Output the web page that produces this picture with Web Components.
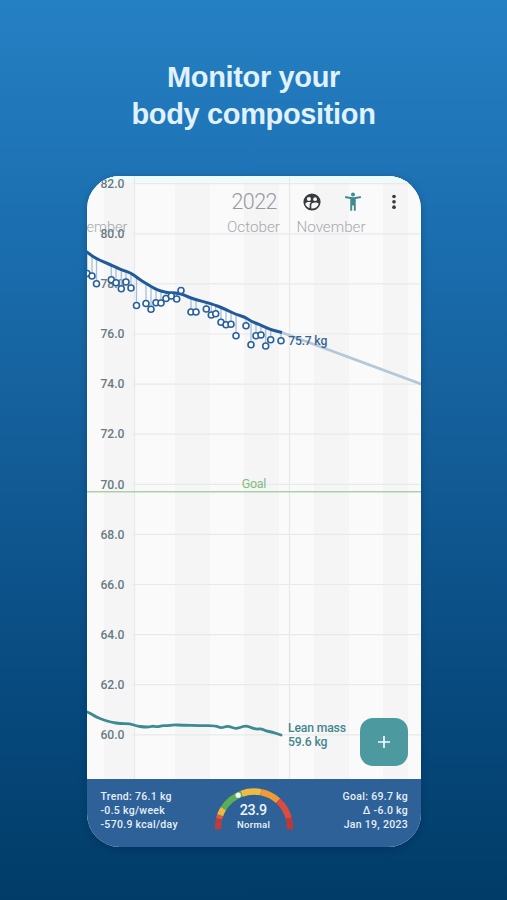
<!DOCTYPE html>
<html lang="en">
<head>
<meta charset="utf-8">
<title>Body composition</title>
<style>
  html, body { margin: 0; height: 100%; }
  body { font-family: Roboto, "Noto Sans", sans-serif; }
</style>
</head>
<body>
<promo-screen>
  <span slot="title">Monitor your<br>body composition</span>
  <phone-card>
    <weight-chart></weight-chart>
    <chart-toolbar slot="toolbar"></chart-toolbar>
    <add-button slot="action"></add-button>
    <summary-bar slot="footer">
      <stat-lines>
        <span>Trend: 76.1 kg</span>
        <span>-0.5 kg/week</span>
        <span>-570.9 kcal/day</span>
      </stat-lines>
      <bmi-gauge slot="middle" value="23.9" label="Normal"></bmi-gauge>
      <stat-lines slot="end" align="end">
        <span>Goal: 69.7 kg</span>
        <span>Δ -6.0 kg</span>
        <span>Jan 19, 2023</span>
      </stat-lines>
    </summary-bar>
  </phone-card>
</promo-screen>

<script>
(function () {
  // Chart units: x runs 87..421, y runs 176..779.
  const VIEW = { x: 87, y: 176, width: 334, height: 603 };
  const WEIGHT_TOP = 82;
  const WEIGHT_TOP_Y = 183.7;
  const KG = 25.05;

  const TREND = [
    [86, 251.5], [90, 254.5], [96, 258.5], [104, 262], [111, 265], [117, 267.8], [123, 270.3], [131, 273],
    [137, 277.5], [142, 281], [147, 284], [152, 287], [157, 289.8], [163, 291.7], [169, 292.6],
    [176, 293], [181, 293.8], [186, 296], [191, 298], [197, 300], [206, 302.2], [215, 305], [221, 307.5],
    [228, 310.5], [236, 314.5], [245, 317], [251, 321.3], [260, 324.7], [270, 329.5], [282, 332.5],
  ];

  const READINGS = [
    [87, 273.5], [92, 276], [96.5, 283.7], [111.3, 279.7], [116, 282.7], [121.3, 288.7], [126, 282],
    [131, 288], [136.5, 305.5], [146, 303.5], [151, 309.3], [156, 302.7], [161, 303], [166, 298.5],
    [171.3, 296], [176.7, 299], [181, 290.5], [191, 312], [196, 312], [206.3, 309], [211.3, 315],
    [215.7, 313.7], [221, 322.3], [226, 324.7], [231, 324.3], [236, 335.7], [246, 325.7],
    [251, 344.7], [256, 335.7], [261, 335], [265.7, 346], [270.7, 339.7], [281, 340.7],
  ];

  const LEAN = [
    [86, 711.5], [90, 713], [96, 717], [104, 720], [112, 722.5], [120, 723.5], [130, 723.6], [136, 726],
    [144, 727], [149, 727], [153, 726], [157, 727], [162, 725.6], [167, 725.8], [173, 724.8], [182, 725.2],
    [200, 725.6], [216, 725.8], [221, 728.2], [228, 725.8], [235, 728.8], [240, 727.5], [246, 725.5],
    [252, 728], [257, 729.3], [261, 728.5], [266, 731], [272, 732], [281, 735],
  ];

  // Week stripes: [start, width]
  const STRIPES = [[104, 31], [175, 35], [244, 35], [314, 35], [383, 25]];

  // Rounds the corners by running a quadratic curve through each midpoint.
  function toCurve(list) {
    let d = `M${list[0].join(" ")}`;
    for (let i = 1; i < list.length - 1; i += 1) {
      const [x, y] = list[i];
      const [nextX, nextY] = list[i + 1];
      d += `Q${x} ${y} ${(x + nextX) / 2} ${(y + nextY) / 2}`;
    }
    return `${d}L${list[list.length - 1].join(" ")}`;
  }

  function trendAt(x) {
    for (let i = 1; i < TREND.length; i += 1) {
      const [x0, y0] = TREND[i - 1];
      const [x1, y1] = TREND[i];
      if (x <= x1) return y0 + ((y1 - y0) * (x - x0)) / (x1 - x0);
    }
    return TREND[TREND.length - 1][1];
  }

  class PromoScreen extends HTMLElement {
    constructor() {
      super();
      this.attachShadow({ mode: "open" });
      this.shadowRoot.innerHTML = `
        <style>
          :host {
            align-items: center;
            background: linear-gradient(#2580c3 0%, #1b6fb0 25%, #135d98 50%, #084b80 75%, #013c68 100%);
            box-sizing: border-box;
            display: flex;
            flex-direction: column;
            height: 900px;
            overflow: hidden;
            padding-top: 59px;
          }

          h1 {
            color: #e0f1ff;
            font: bold 29px/36.5px "Liberation Sans", Arial, sans-serif;
            height: 117px;
            letter-spacing: -0.35px;
            margin: 0;
            text-align: center;
          }
        </style>
        <h1><slot name="title"></slot></h1>
        <slot></slot>
      `;
    }
  }

  class PhoneCard extends HTMLElement {
    constructor() {
      super();
      this.attachShadow({ mode: "open" });
      this.shadowRoot.innerHTML = `
        <style>
          :host {
            background: #fafafa;
            border-radius: 33px;
            box-shadow: 0 2px 7px rgba(0, 25, 60, 0.3);
            display: flex;
            flex-direction: column;
            height: 671px;
            margin-left: 1px;
            overflow: hidden;
            position: relative;
            width: 334px;
          }

          .toolbar {
            position: absolute;
            right: 17px;
            top: 15px;
          }

          .action {
            position: absolute;
            bottom: 81px;
            right: 13px;
          }
        </style>
        <slot></slot>
        <div class="toolbar"><slot name="toolbar"></slot></div>
        <div class="action"><slot name="action"></slot></div>
        <slot name="footer"></slot>
      `;
    }
  }

  class WeightChart extends HTMLElement {
    constructor() {
      super();
      this.attachShadow({ mode: "open" });
    }

    connectedCallback() {
      this.render();
    }

    render() {
      const stripes = STRIPES.map(
        ([x, width]) => `<rect x="${x}" y="176" width="${width}" height="603" fill="#f5f5f5"/>`
      ).join("");

      let rows = "";
      let labels = "";
      for (let kg = WEIGHT_TOP; kg >= 60; kg -= 2) {
        const y = WEIGHT_TOP_Y + (WEIGHT_TOP - kg) * KG;
        rows += `<path d="M133 ${y}H421"/>`;
        labels += `<text x="100.5" y="${y + 4.2}" textLength="24">${kg.toFixed(1)}</text>`;
      }

      const stems = READINGS.map(([x, y]) => `M${x} ${trendAt(x).toFixed(1)}V${y}`).join("");
      const dots = READINGS.map(([x, y]) => `<circle cx="${x}" cy="${y}" r="3"/>`).join("");

      this.shadowRoot.innerHTML = `
        <style>
          :host {
            display: block;
            flex: 1;
          }

          svg { display: block; }
          text { font-family: Roboto, sans-serif; }
          .grid { fill: none; stroke: #e7eaea; stroke-width: 1.2; }
          .axis { fill: #687b84; font-size: 12.2px; font-weight: 500; }
          .months { fill: #a5a9ad; font-size: 15.5px; font-weight: 300; }
          .months .year { fill: #97999c; font-size: 21.5px; }
          .stems { fill: none; stroke: #a5bfda; stroke-width: 1.3; }
          .dots { fill: #fff; stroke: #285f9f; stroke-width: 1.6; }
          .trend { fill: none; stroke: #205a9b; stroke-linejoin: round; stroke-width: 3; }
          .forecast { stroke: #b5c8d8; stroke-width: 2.8; }
          .lean { fill: none; stroke: #3d8a91; stroke-linecap: round; stroke-linejoin: round; stroke-width: 2.8; }
          .current { fill: #386396; font-size: 12.2px; font-weight: 500; }
          .mass { fill: #43868d; font-size: 12.2px; font-weight: 500; }
          .goal { fill: #83bb7d; font-size: 12.5px; }
        </style>
        <svg width="${VIEW.width}" height="${VIEW.height}" viewBox="${VIEW.x} ${VIEW.y} ${VIEW.width} ${VIEW.height}">
          <rect x="87" y="176" width="334" height="603" fill="#fafafa"/>
          ${stripes}
          <rect x="87" y="176" width="334" height="6" fill="#edfcfb"/>
          <g class="grid">${rows}<path d="M134.500 176V779M289.500 176V779"/></g>
          <g class="months">
            <text class="year" x="231.500" y="208.800" textLength="46">2022</text>
            <text x="127.500" y="232" text-anchor="end" textLength="70" lengthAdjust="spacingAndGlyphs">September</text>
            <text x="227" y="232" textLength="53" lengthAdjust="spacingAndGlyphs">October</text>
            <text x="296.500" y="232" textLength="69" lengthAdjust="spacingAndGlyphs">November</text>
          </g>
          <g class="axis">${labels}</g>
          <path d="M87 491.700H421" stroke="#a9d2a6" stroke-width="1.500"/>
          <text class="goal" x="241.800" y="487.800" textLength="24.500">Goal</text>
          <path class="forecast" d="M282 332.500L422 384.300"/>
          <path class="stems" d="${stems}"/>
          <path class="trend" d="${toCurve(TREND)}"/>
          <g class="dots">${dots}</g>
          <text class="current" x="288.300" y="344.500" textLength="39">75.7 kg</text>
          <path class="lean" d="${toCurve(LEAN)}"/>
          <g class="mass">
            <text x="288" y="731.800" textLength="58">Lean mass</text>
            <text x="288" y="745.600" textLength="39.500">59.6 kg</text>
          </g>
        </svg>
      `;
    }
  }

  class ChartToolbar extends HTMLElement {
    constructor() {
      super();
      this.attachShadow({ mode: "open" });
      this.shadowRoot.innerHTML = `
        <style>
          :host {
            align-items: center;
            display: flex;
            gap: 21px;
            height: 21px;
          }

          svg { display: block; }
        </style>
        <svg width="20" height="20" viewBox="0 0 24 24">
          <circle cx="12" cy="12" r="10.300" fill="#393b3e"/>
          <g fill="#f8f8f8">
            <circle cx="8.300" cy="8.400" r="2.500"/>
            <circle cx="15.700" cy="8.600" r="2.200"/>
            <path d="M4 14.300C4.200 12.700 6.400 12 8.300 12c1 0 1.900.2 2.600.5-1.200.8-1.700 1.600-1.700 2.700v4.100C6.600 18.500 4.700 16.700 4 14.300z"/>
            <path d="M11.200 15.300c0-1.500 2.300-2.600 4.600-2.600 1.800 0 3.700.6 4.200 1.700-.8 3.100-4 5.500-7.800 5.500-.3 0-.7 0-1-.1z"/>
          </g>
        </svg>
        <svg width="20" height="20" viewBox="0 0 24 24" fill="#408b91">
          <circle cx="12" cy="3" r="2.400"/>
          <path d="M2.900 4.900C6 5.800 9 6.200 12 6.200s6-.4 9.100-1.300l.6 2.300c-2.100.6-4.300 1-6.400 1.200V22.600h-2.300v-6.500h-2V22.600H8.700V8.400c-2.100-.2-4.300-.6-6.400-1.200z"/>
        </svg>
        <svg width="20" height="20" viewBox="0 0 24 24" fill="#393b3e">
          <circle cx="12" cy="5.400" r="2.200"/>
          <circle cx="12" cy="11.800" r="2.200"/>
          <circle cx="12" cy="18.200" r="2.200"/>
        </svg>
      `;
    }
  }

  class AddButton extends HTMLElement {
    constructor() {
      super();
      this.attachShadow({ mode: "open" });
      this.shadowRoot.innerHTML = `
        <style>
          :host { display: block; }

          button {
            align-items: center;
            background: #4c999f;
            border: 0;
            border-radius: 13px;
            display: flex;
            height: 48px;
            justify-content: center;
            padding: 0;
            width: 48px;
          }
        </style>
        <button aria-label="Add">
          <svg width="14" height="14" viewBox="0 0 14 14" fill="none" stroke="#f2fbfb" stroke-width="1.700">
            <path d="M7 1v12M1 7h12"/>
          </svg>
        </button>
      `;
    }
  }

  class SummaryBar extends HTMLElement {
    constructor() {
      super();
      this.attachShadow({ mode: "open" });
      this.shadowRoot.innerHTML = `
        <style>
          :host {
            background: #2e6198;
            box-sizing: border-box;
            color: #e5eff9;
            display: grid;
            grid-template-columns: 1fr 82px 1fr;
            height: 68px;
            padding: 7px 13px 0 13.5px;
          }
        </style>
        <slot></slot>
        <slot name="middle"></slot>
        <slot name="end"></slot>
      `;
    }
  }

  class StatLines extends HTMLElement {
    constructor() {
      super();
      this.attachShadow({ mode: "open" });
      this.shadowRoot.innerHTML = `
        <style>
          :host {
            display: flex;
            flex-direction: column;
            font-size: 10.5px;
            font-weight: 500;
            letter-spacing: 0.3px;
            line-height: 13.8px;
            padding-top: 4px;
            white-space: nowrap;
          }

          :host([align="end"]) { align-items: flex-end; }
        </style>
        <slot></slot>
      `;
    }
  }

  class BmiGauge extends HTMLElement {
    constructor() {
      super();
      this.attachShadow({ mode: "open" });
    }

    connectedCallback() {
      this.render();
    }

    render() {
      // Angles in degrees, counted clockwise from the left end.
      const zones = [
        [-3, 14, "#bd3d3b"],
        [14, 20, "#dd5741"],
        [20, 32, "#edb83f"],
        [32, 70, "#5bae54"],
        [70, 101, "#efbb42"],
        [101, 132, "#ee9a38"],
        [132, 165, "#dd4b3e"],
        [165, 183, "#bd3838"],
      ];
      const at = (deg) => {
        const rad = ((deg + 180) * Math.PI) / 180;
        return `${(41 + 36 * Math.cos(rad)).toFixed(2)} ${(41.5 + 36 * Math.sin(rad)).toFixed(2)}`;
      };
      const arcs = zones
        .map(([from, to, color]) => `<path d="M${at(from)}A36 36 0 0 1 ${at(to)}" stroke="${color}"/>`)
        .join("");
      const [dotX, dotY] = at(64).split(" ");

      this.shadowRoot.innerHTML = `
        <style>
          :host { display: block; }
          svg { display: block; }
          text { fill: #edf5fc; font-family: Roboto, sans-serif; font-weight: 500; text-anchor: middle; }
        </style>
        <svg width="82" height="52" viewBox="0 0 82 52">
          <g fill="none" stroke-width="6.300">${arcs}</g>
          <circle cx="${dotX}" cy="${dotY}" r="2.600" fill="#f4faf4"/>
          <text x="40.500" y="29" font-size="14.300" textLength="27.500">${this.getAttribute("value")}</text>
          <text x="40.500" y="41.800" font-size="9.500" textLength="33">${this.getAttribute("label")}</text>
        </svg>
      `;
    }
  }

  customElements.define("promo-screen", PromoScreen);
  customElements.define("phone-card", PhoneCard);
  customElements.define("weight-chart", WeightChart);
  customElements.define("chart-toolbar", ChartToolbar);
  customElements.define("add-button", AddButton);
  customElements.define("summary-bar", SummaryBar);
  customElements.define("stat-lines", StatLines);
  customElements.define("bmi-gauge", BmiGauge);
})();
</script>
</body>
</html>
